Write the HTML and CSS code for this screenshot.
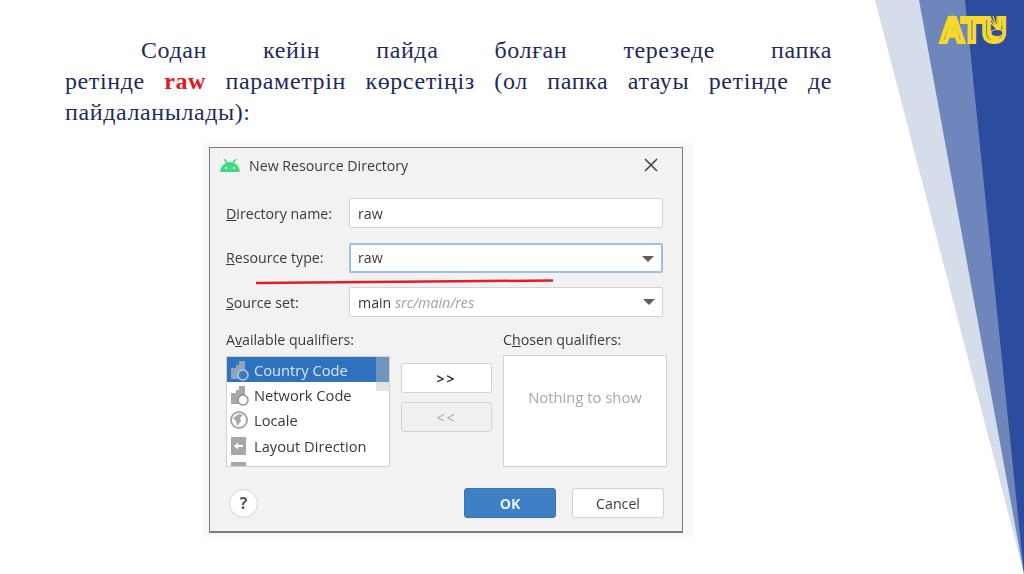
FILE: index.html
```html
<!DOCTYPE html>
<html lang="en">

<head>
    <meta charset="UTF-8">
    <meta name="viewport" content="width=device-width, initial-scale=1.0">
    <title>New Resource Directory</title>
    <link rel="stylesheet" href="styles.css">
</head>

<body>
    <div class="slide">
        <!-- Corner stripes -->
        <svg class="stripes" width="164" height="574" viewBox="0 0 164 574">
            <polygon points="15,0 164,574 164,0" fill="#d5dcea"/>
            <polygon points="59,0 164,574 164,0" fill="#6e86bb"/>
            <polygon points="105,0 164,574 164,0" fill="#2b4c9f"/>
        </svg>

        <!-- Logo -->
        <svg class="logo" width="84" height="40" viewBox="0 0 84 40">
            <text x="8" y="32" class="logo-text" textLength="66" lengthAdjust="spacingAndGlyphs">ATU</text>
            <g class="logo-rays">
                <path d="M65 19L58 7M65 19L61 6M65 19L65 6M65 19L69 6M65 19L72 7M65 19L58 12M65 19L72 12"/>
            </g>
            <ellipse cx="65" cy="23" rx="6" ry="3.5" fill="#2b4c9f" stroke="#f6d92b" stroke-width="1.2"/>
        </svg>

        <p class="lead">
            <span class="line first-line">Содан кейін пайда болған терезеде папка</span>
            <span class="line">ретінде <b class="hl">raw</b> параметрін көрсетіңіз (ол папка атауы ретінде де</span>
            <span class="line last-line">пайдаланылады):</span>
        </p>

        <div class="shot">
            <div class="dialog">
                <div class="title-bar">
                    <svg width="20" height="13" viewBox="0 0 20 13">
                        <path d="M0 13a10 10 0 0 1 20 0z" fill="#3ddc84"/>
                        <path d="M4 0l3 4M16 0l-3 4" stroke="#3ddc84" stroke-width="1.5"/>
                        <circle cx="6" cy="9" r="1" fill="#f2f2f2"/>
                        <circle cx="14" cy="9" r="1" fill="#f2f2f2"/>
                    </svg>
                    <span class="title">New Resource Directory</span>
                    <svg class="close" width="14" height="14" viewBox="0 0 14 14">
                        <path d="M1 1l12 12M13 1L1 13" stroke="#444" stroke-width="1.6"/>
                    </svg>
                </div>

                <div class="form">
                    <label><u>D</u>irectory name:</label>
                    <div class="field">raw</div>
                    <label><u>R</u>esource type:</label>
                    <div class="field focused">raw<i class="arrow"></i></div>
                    <label><u>S</u>ource set:</label>
                    <div class="field">main&nbsp;<em>src/main/res</em><i class="arrow"></i></div>
                </div>

                <div class="qualifiers">
                    <div class="col">
                        <div class="col-label">A<u>v</u>ailable qualifiers:</div>
                        <ul class="list">
                            <li class="selected">
                                <svg width="20" height="22" viewBox="0 0 20 22"><path d="M1 9h5V6h3V2h6v18H1z" fill="#8fa3bd"/><circle cx="13" cy="16" r="5" fill="#3f78bd" stroke="#b9c9dc" stroke-width="1.5"/></svg>
                                Country Code
                            </li>
                            <li>
                                <svg width="20" height="22" viewBox="0 0 20 22"><path d="M1 9h5V6h3V2h6v18H1z" fill="#a4a8ad"/><circle cx="13" cy="16" r="5" fill="#fff" stroke="#8d9196" stroke-width="1.5"/></svg>
                                Network Code
                            </li>
                            <li>
                                <svg width="20" height="20" viewBox="0 0 20 20"><circle cx="9" cy="10" r="8" fill="#fff" stroke="#a4a8ad" stroke-width="2"/><path d="M3 8l6-4 4 1-3 3 1 3-4 5-1-5z" fill="#a4a8ad"/></svg>
                                Locale
                            </li>
                            <li>
                                <svg width="20" height="18" viewBox="0 0 20 18"><rect x="1" width="15" height="18" fill="#a4a8ad"/><path d="M4 9l4-3.5V8h5v2H8v2.500z" fill="#fff"/></svg>
                                Layout Direction
                            </li>
                            <li class="cut">
                                <svg width="20" height="18" viewBox="0 0 20 18"><rect x="1" width="15" height="18" fill="#a4a8ad"/></svg>
                            </li>
                        </ul>
                        <div class="scroll-thumb"></div>
                    </div>
                    <div class="move-buttons">
                        <div class="btn arrows">&gt;&gt;</div>
                        <div class="btn arrows disabled">&lt;&lt;</div>
                    </div>
                    <div class="col">
                        <div class="col-label">C<u>h</u>osen qualifiers:</div>
                        <div class="chosen">Nothing to show</div>
                    </div>
                </div>

                <div class="footer">
                    <div class="help">?</div>
                    <div class="btn primary">OK</div>
                    <div class="btn cancel">Cancel</div>
                </div>
            </div>
            <!-- Red underline drawn on top of the screenshot -->
            <svg class="mark" width="300" height="6" viewBox="0 0 300 6">
                <path d="M0 4L297 1.500" stroke="#e01f2d" stroke-width="2.500"/>
            </svg>
        </div>
    </div>
</body>

</html>
```

FILE: styles.css
```css
* {
    box-sizing: border-box;
}

body {
    margin: 0;
    background-color: #fff;
    overflow: hidden;
}

.slide {
    position: relative;
    width: 1024px;
    height: 574px;
    padding: 35px 192px 0 65px;
    overflow: hidden;
}

.stripes {
    position: absolute;
    top: 0;
    left: 860px;
}

.logo {
    position: absolute;
    top: 10px;
    left: 932px;
}

.logo-text {
    font-family: "Liberation Sans", sans-serif;
    font-size: 35px;
    font-weight: bold;
    fill: #3f5fa9;
    stroke: #f6d92b;
    stroke-width: 4px;
}

.logo-rays {
    fill: none;
    stroke: #f6d92b;
    stroke-width: 1.2px;
}

.lead {
    margin: 0;
    font-family: "Liberation Serif", serif;
    font-size: 24px;
    line-height: 31px;
    letter-spacing: 0.6px;
    color: #1f2a5c;
}

.line {
    display: block;
    text-align: justify;
    text-align-last: justify;
}

.first-line {
    padding-left: 76px;
}

.last-line {
    text-align-last: left;
}

.hl {
    color: #e8141c;
}

/* Screenshot of the dialog */
.shot {
    position: relative;
    width: 490px;
    height: 394px;
    margin: 15px 0 0 138px;
    padding: 4px 10px 4px 6px;
    background-color: #f8f8fa;
    filter: blur(0.4px);
}

.mark {
    position: absolute;
    top: 136px;
    left: 53px;
}

.dialog {
    height: 386px;
    padding: 0 16px;
    background-color: #f2f2f2;
    border: 1px solid #7d7d7d;
    border-bottom-width: 2px;
    font-family: "Open Sans", sans-serif;
    font-size: 14.2px;
    color: #3a3a3a;
}

.title-bar {
    display: flex;
    align-items: center;
    height: 36px;
    margin-left: -6px;
    padding-bottom: 2px;
}

.title {
    margin-left: 9px;
}

.close {
    margin-left: auto;
    margin-right: 8px;
}

.form {
    display: grid;
    grid-template-columns: 123px 314px;
    row-gap: 14.5px;
    align-items: center;
    margin-top: 14px;
}

.field {
    position: relative;
    display: flex;
    align-items: center;
    height: 30px;
    padding-left: 8px;
    background-color: #fff;
    border: 1px solid #d2d2d2;
    border-radius: 2px;
}

.focused {
    border: 2px solid #9dbfe4;
    padding-left: 7px;
}

.field em {
    color: #a0a0a0;
}

.arrow {
    position: absolute;
    top: 11px;
    right: 7px;
    border-top: 6px solid #5e5e5e;
    border-left: 6px solid transparent;
    border-right: 6px solid transparent;
}

.qualifiers {
    display: flex;
    margin-top: 13px;
}

.col {
    position: relative;
    flex: none;
    width: 164px;
}

.col-label {
    height: 26px;
    line-height: 19px;
}

.list {
    height: 111px;
    margin: 0;
    padding: 0;
    list-style: none;
    background-color: #fff;
    border: 1px solid #d2d2d2;
    font-size: 14.7px;
    overflow: hidden;
}

.list li {
    display: flex;
    align-items: center;
    gap: 4px;
    height: 25.4px;
    padding-left: 3px;
}

.list li.selected {
    background-color: #2f72bd;
    color: #d6e6f5;
}

.scroll-thumb {
    position: absolute;
    top: 27px;
    right: 1px;
    width: 13px;
    height: 34px;
    background-color: rgba(190, 190, 190, 0.45);
}

.move-buttons {
    display: flex;
    flex: none;
    flex-direction: column;
    gap: 9px;
    width: 91px;
    margin: 33px 11px 0;
}

.btn {
    display: flex;
    align-items: center;
    justify-content: center;
    height: 30px;
    background-color: #fff;
    border: 1px solid #d2d2d2;
    border-radius: 3px;
}

.arrows {
    font-weight: bold;
    letter-spacing: 2px;
}

.btn.disabled {
    background-color: #f0f0f0;
    color: #a8a8a8;
    font-weight: normal;
}

.chosen {
    display: flex;
    justify-content: center;
    height: 112px;
    margin-top: -1px;
    padding-top: 31px;
    background-color: #fff;
    border: 1px solid #d2d2d2;
    font-size: 14.8px;
    color: #a8a8a8;
}

.footer {
    display: flex;
    align-items: center;
    margin-top: 21px;
    padding-left: 3px;
}

.help {
    display: flex;
    align-items: center;
    justify-content: center;
    width: 29px;
    height: 29px;
    background-color: #fff;
    border: 1px solid #d2d2d2;
    border-radius: 50%;
    font-size: 16px;
    font-weight: bold;
    color: #555;
}

.footer .btn {
    width: 92px;
}

.primary {
    margin-left: auto;
    background-color: #3f7fc4 !important;
    border-color: #3a75b5 !important;
    color: #e8f0f8;
    font-weight: bold;
}

.cancel {
    margin-left: 16px;
    margin-right: 2px;
}
```
